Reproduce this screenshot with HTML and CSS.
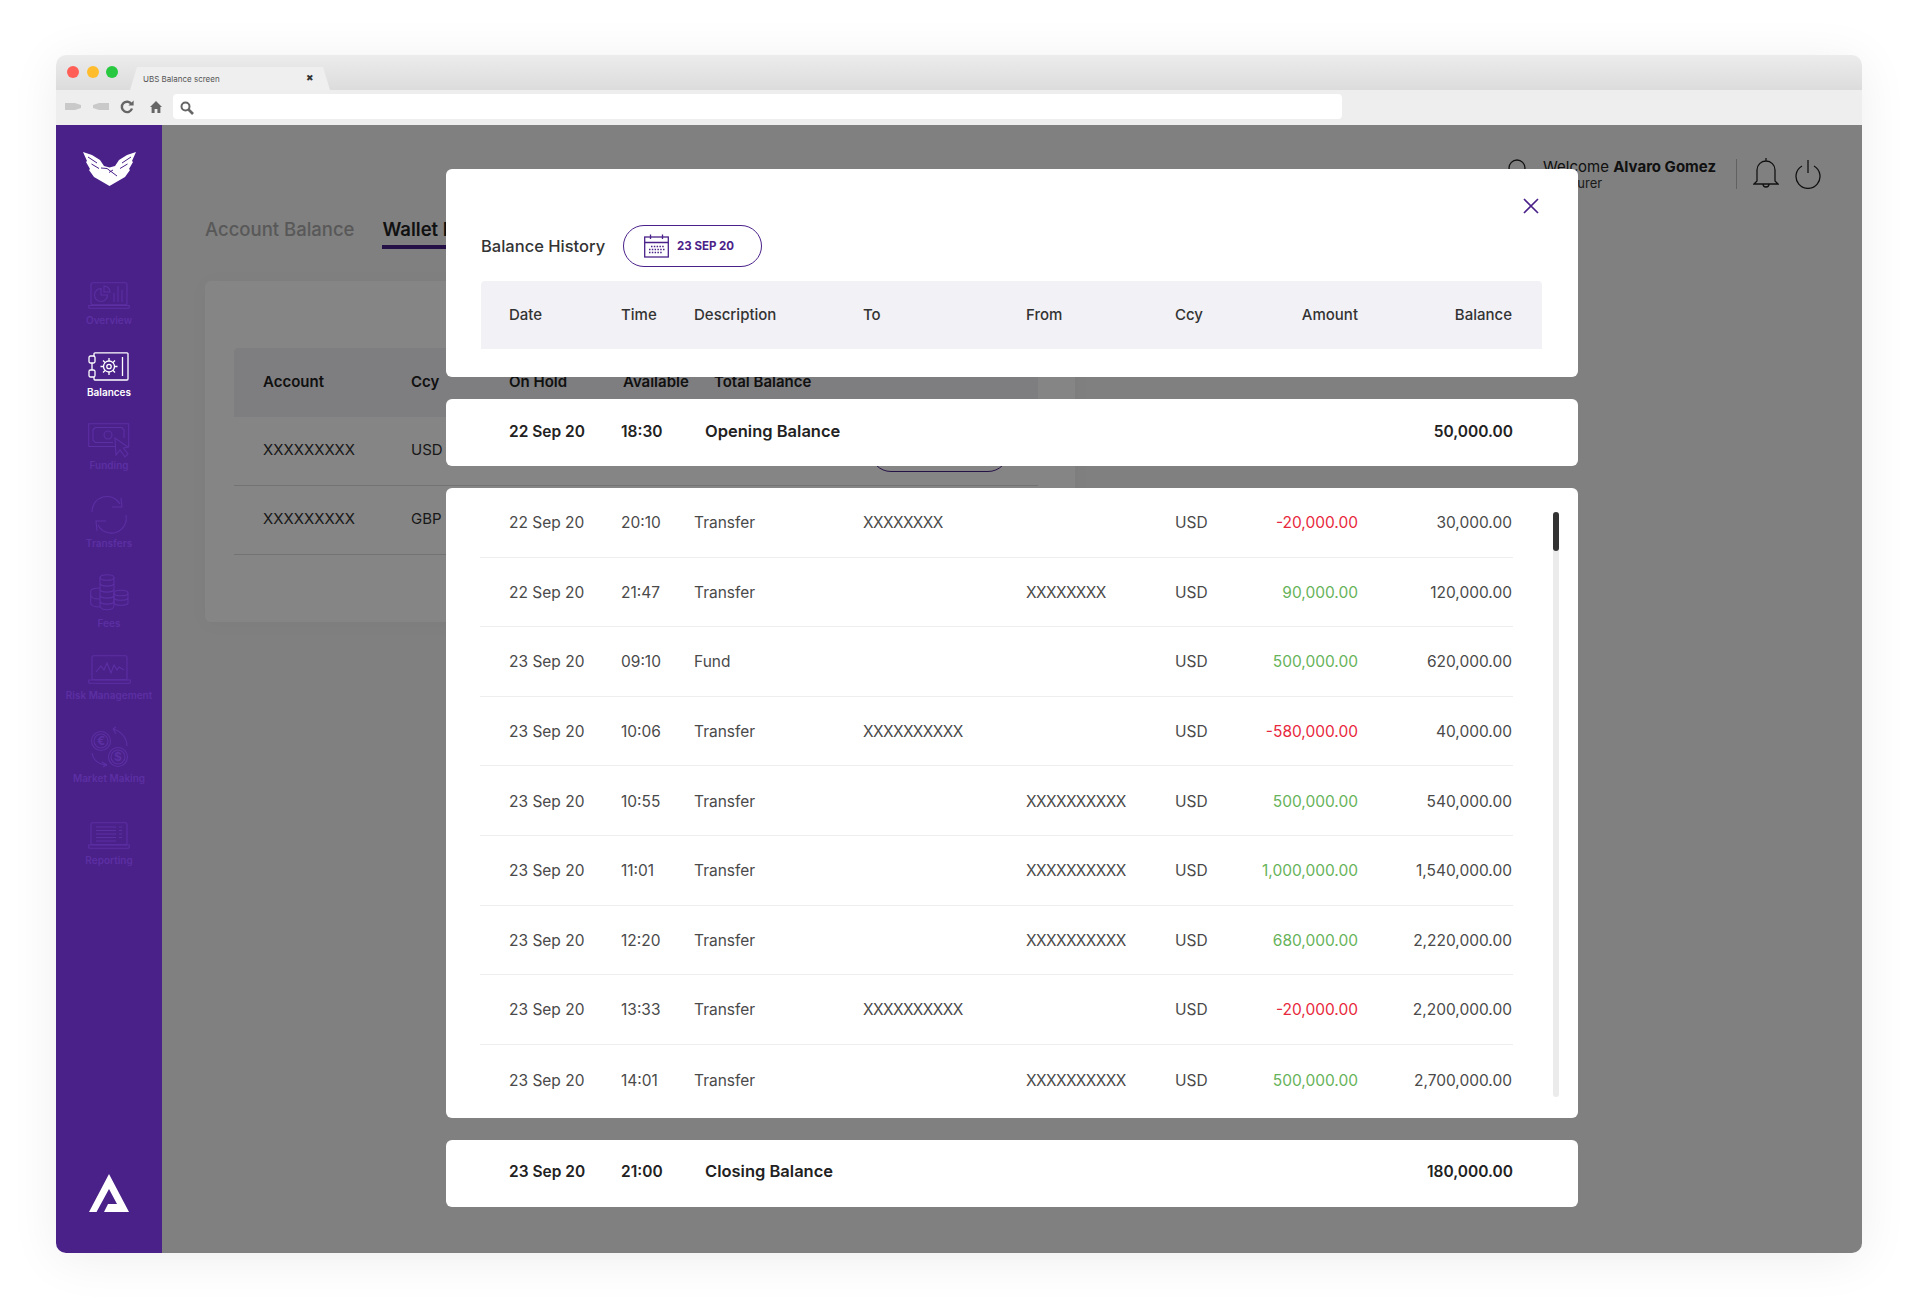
FILE: index.html
```html
<!DOCTYPE html>
<html lang="en">
<head>
    <meta charset="UTF-8">
    <title>UBS Balance screen</title>
    <link rel="stylesheet" href="styles.css">
</head>
<body>

    <div class="window">

        <!-- browser chrome -->
        <div class="titlebar">
            <div class="lights">
                <span class="light red"></span>
                <span class="light yellow"></span>
                <span class="light green"></span>
            </div>
            <div class="tab">
                <span>UBS Balance screen</span>
                <span class="tab-close">✖</span>
            </div>
        </div>
        <div class="toolbar">
            <svg class="tool-back" width="16" height="9" viewBox="0 0 16 9"><path d="M0 1 10 1 16 3V6L10 8 0 8Z" fill="#c9c9c9"/></svg>
            <svg class="tool-forward" width="16" height="9" viewBox="0 0 16 9"><path d="M16 1 6 1 0 3V6L6 8 16 8Z" fill="#c9c9c9"/></svg>
            <svg class="tool-reload" width="14" height="14" viewBox="0 0 14 14"><path d="M11.5 4.2A5.2 5.2 0 1 0 12 8.5" fill="none" stroke="#666" stroke-width="2.4"/><path d="M8.4 5.6 13.6 5.6 13.6 .6Z" fill="#666"/></svg>
            <svg class="tool-home" width="12" height="12" viewBox="0 0 12 12"><path d="M6 0 12 6H10.4V12H7.4V8H4.6V12H1.6V6H0Z" fill="#666"/></svg>
            <div class="address">
                <svg width="14" height="14" viewBox="0 0 14 14"><circle cx="5.5" cy="5.5" r="4" fill="none" stroke="#666" stroke-width="2"/><path d="M8.5 8.5 13 13" stroke="#666" stroke-width="2.6"/></svg>
            </div>
        </div>

        <div class="app">

            <!-- sidebar -->
            <aside class="sidebar">
                <svg class="logo" width="53" height="35" viewBox="0 0 53 35">
                    <path d="M0 0 9 3 17 8 21 14 26.500 15.500 32 14 36 8 44 3 53 0 49 9 50 10 46 17 47 18 42 25 26.500 34 11 25 6 18 7 17 3 10 4 9Z" fill="#fff"/>
                    <path d="M5 5 14 11M8.500 12 16 16.500M48 5 39 11M44.500 12 37 16.500M18 16 24 16.500 34 24M26 20.500 30 18" fill="none" stroke="#4a2189" stroke-width="1"/>
                </svg>
                <nav class="nav">
                    <a class="nav-item item-overview">
                        <svg width="42" height="27" viewBox="0 0 42 27" fill="none"><rect x="3" y=".7" width="36" height="22" rx="1.5"/><path d="M.7 23.5H41.3V25a1.3 1.3 0 0 1-1.3 1.3H2A1.3 1.3 0 0 1 .7 25Z"/><path d="M13 6.500A6.500 6.500 0 1 0 19.500 13H13ZM16 4A6 6 0 0 1 22 10H16ZM26 20V11M30 20V4M34 20V8"/></svg>
                        <span>Overview</span>
                    </a>
                    <a class="nav-item item-balances active">
                        <svg width="41" height="29" viewBox="0 0 41 29" fill="none"><path d="M6 4V1.800A1 1 0 0 1 7 .8H39a1 1 0 0 1 1 1V27a1 1 0 0 1-1 1H7a1 1 0 0 1-1-1V25"/><path d="M34.500 5V24"/><rect x="1" y="4" width="6" height="7" rx="1.500"/><rect x="1" y="18" width="6" height="7" rx="1.500"/><path d="M4 11V18"/><circle cx="21" cy="14.500" r="5.500"/><circle cx="21" cy="14.500" r="2.200"/><path d="M21 6V9M21 20V23M12.500 14.500H15.500M26.500 14.500H29.500M15 8.500 17 10.500M25 18.500 27 20.500M27 8.500 25 10.500M17 18.500 15 20.500"/></svg>
                        <span>Balances</span>
                    </a>
                    <a class="nav-item item-funding">
                        <svg width="42" height="35" viewBox="0 0 42 35" fill="none"><path d="M27 23.500H.7V.7H40.700V23.500H39"/><path d="M25 19.500H7A3 3 0 0 0 5 17.500V6.500A3 3 0 0 0 7 4.500H34A3 3 0 0 0 36 6.500V15"/><circle cx="20" cy="12" r="4"/><path d="M27 15 28 32 32 27 37 34 40 31 35.500 25 40 24Z"/></svg>
                        <span>Funding</span>
                    </a>
                    <a class="nav-item item-transfers">
                        <svg width="36" height="34" viewBox="0 0 36 34" fill="none"><path d="M1 15A15 15 0 0 1 29 7"/><path d="M30 1 31 10 21 10"/><path d="M35 18A15 15 0 0 1 7 28"/><path d="M6 34 5 24 15 24"/></svg>
                        <span>Transfers</span>
                    </a>
                    <a class="nav-item item-fees">
                        <svg width="39" height="37" viewBox="0 0 39 37" fill="none"><ellipse cx="17" cy="3.500" rx="7" ry="2.800"/><path d="M10 3.500V32M24 3.500V32M10 9.500C11 13 23 13 24 9.500M10 15.500C11 19 23 19 24 15.500M10 21.500C11 25 23 25 24 21.500M10 27.500C11 31 23 31 24 27.500M10 32C11 37 23 37 24 32"/><path d="M10 14C4 14 1 15 .7 17V29C1 32 6 33 10 33M.7 21C1 24 6 25 10 25"/><ellipse cx="31" cy="19" rx="7" ry="2.800"/><path d="M24 19V29C25 32 37 32 38 29V19M24 24C25 27 37 27 38 24"/></svg>
                        <span>Fees</span>
                    </a>
                    <a class="nav-item item-risk">
                        <svg width="43" height="29" viewBox="0 0 43 29" fill="none"><rect x="4" y=".7" width="35" height="24" rx="1.500"/><path d="M.7 25H42.300V27a1.300 1.300 0 0 1-1.300 1.300H2A1.300 1.300 0 0 1 .7 27Z"/><path d="M8 17 13 11 16 15 19 8 23 18 26 10 29 15 31 12 36 15"/></svg>
                        <span>Risk Management</span>
                    </a>
                    <a class="nav-item item-market">
                        <svg width="37" height="39" viewBox="0 0 37 39" fill="none"><circle cx="10" cy="13" r="9.500"/><circle cx="10" cy="13" r="7"/><circle cx="27" cy="29" r="9.500"/><circle cx="27" cy="29" r="7"/><path d="M22 1C30 3 36 10 36 18M22 1 25 -1M22 1 25 6M1 25C2 32 8 37 16 37M16 37 11 34M16 37 12 39"/><text x="10" y="17" text-anchor="middle" class="money">€</text><text x="27" y="33" text-anchor="middle" class="money">$</text></svg>
                        <span>Market Making</span>
                    </a>
                    <a class="nav-item item-reporting">
                        <svg width="42" height="27" viewBox="0 0 42 27" fill="none"><rect x="3" y=".7" width="36" height="22" rx="1.500"/><path d="M.7 23H41.300V25a1.300 1.300 0 0 1-1.300 1.300H2A1.300 1.300 0 0 1 .7 25Z"/><path d="M8 5H28M8 8.500H28M8 12H28M8 15.500H28M8 19H28M31 5H34M31 8.500H34M31 12H34M31 15.500H34"/></svg>
                        <span>Reporting</span>
                    </a>
                </nav>
                <svg class="brand" width="40" height="38" viewBox="0 0 40 38"><path d="M20 0 40 38H15L19 30H28L20 15 7.500 38H0Z" fill="#fff"/></svg>
            </aside>

            <!-- page under the dialog -->
            <main class="main">
                <header class="topbar">
                    <svg class="search" width="20" height="20" viewBox="0 0 20 20"><circle cx="9" cy="9" r="8" fill="none" stroke="#222" stroke-width="1.300"/></svg>
                    <div class="user">
                        <div>Welcome <b>Alvaro Gomez</b></div>
                        <div class="role">Treasurer</div>
                    </div>
                    <div class="divider"></div>
                    <svg width="26" height="32" viewBox="0 0 26 32" fill="none" stroke="#222" stroke-width="1.300"><path d="M13 1V4M4 24V13A9 9 0 0 1 22 13V24L25 27H1ZM10 27C10 31 16 31 16 27"/></svg>
                    <svg class="power" width="26" height="30" viewBox="0 0 26 30" fill="none" stroke="#222" stroke-width="1.300"><path d="M13 1V14M7 7A12 12 0 1 0 19 7"/></svg>
                </header>
                <div class="tabs">
                    <a class="page-tab">Account Balance</a>
                    <a class="page-tab current">Wallet Balance</a>
                </div>
                <section class="card">
                    <div class="acc-row acc-head">
                        <span>Account</span><span>Ccy</span><span>On Hold</span><span>Available</span><span>Total Balance</span>
                    </div>
                    <div class="acc-row">
                        <span>XXXXXXXXX</span><span>USD</span><span></span><span></span><span></span><a class="history-btn"></a>
                    </div>
                    <div class="acc-row">
                        <span>XXXXXXXXX</span><span>GBP</span>
                    </div>
                </section>

                <div class="overlay"></div>

                <!-- balance history dialog -->
                <div class="dialog">
                    <div class="panel dialog-head">
                        <svg class="close" width="16" height="16" viewBox="0 0 16 16"><path d="M1 1 15 15M15 1 1 15" stroke="#4a2189" stroke-width="1.700"/></svg>
                        <div class="dialog-title">
                            <h2>Balance History</h2>
                            <div class="date-pill">
                                <svg width="25" height="24" viewBox="0 0 25 24" fill="none" stroke="#4a2189" stroke-width="1.300"><rect x=".7" y="3" width="23.600" height="20"/><path d="M.7 8.500H24.300M6.500 .5V5M18.500 .5V5"/><path d="M7 12.500H21M5 15.500H21M5 18.500H18" stroke-dasharray="1.500 1.300" stroke-width="1.400"/></svg>
                                <span>23 SEP 20</span>
                            </div>
                        </div>
                        <div class="tx tx-head">
                            <span>Date</span><span>Time</span><span>Description</span><span>To</span><span>From</span><span>Ccy</span><span class="num">Amount</span><span class="num">Balance</span>
                        </div>
                    </div>

                    <div class="panel summary">
                        <span>22 Sep 20</span><span>18:30</span><span class="summary-label">Opening Balance</span><span class="num">50,000.00</span>
                    </div>

                    <div class="panel history">
                        <div class="tx-list">
                            <div class="tx"><span>22 Sep 20</span><span>20:10</span><span>Transfer</span><span class="mask">XXXXXXXX</span><span></span><span>USD</span><span class="num neg">-20,000.00</span><span class="num">30,000.00</span></div>
                            <div class="tx"><span>22 Sep 20</span><span>21:47</span><span>Transfer</span><span></span><span class="mask">XXXXXXXX</span><span>USD</span><span class="num pos">90,000.00</span><span class="num">120,000.00</span></div>
                            <div class="tx"><span>23 Sep 20</span><span>09:10</span><span>Fund</span><span></span><span></span><span>USD</span><span class="num pos">500,000.00</span><span class="num">620,000.00</span></div>
                            <div class="tx"><span>23 Sep 20</span><span>10:06</span><span>Transfer</span><span class="mask">XXXXXXXXXX</span><span></span><span>USD</span><span class="num neg">-580,000.00</span><span class="num">40,000.00</span></div>
                            <div class="tx"><span>23 Sep 20</span><span>10:55</span><span>Transfer</span><span></span><span class="mask">XXXXXXXXXX</span><span>USD</span><span class="num pos">500,000.00</span><span class="num">540,000.00</span></div>
                            <div class="tx"><span>23 Sep 20</span><span>11:01</span><span>Transfer</span><span></span><span class="mask">XXXXXXXXXX</span><span>USD</span><span class="num pos">1,000,000.00</span><span class="num">1,540,000.00</span></div>
                            <div class="tx"><span>23 Sep 20</span><span>12:20</span><span>Transfer</span><span></span><span class="mask">XXXXXXXXXX</span><span>USD</span><span class="num pos">680,000.00</span><span class="num">2,220,000.00</span></div>
                            <div class="tx"><span>23 Sep 20</span><span>13:33</span><span>Transfer</span><span class="mask">XXXXXXXXXX</span><span></span><span>USD</span><span class="num neg">-20,000.00</span><span class="num">2,200,000.00</span></div>
                            <div class="tx"><span>23 Sep 20</span><span>14:01</span><span>Transfer</span><span></span><span class="mask">XXXXXXXXXX</span><span>USD</span><span class="num pos">500,000.00</span><span class="num">2,700,000.00</span></div>
                        </div>
                        <div class="scroll-track"><div class="scroll-thumb"></div></div>
                    </div>

                    <div class="panel summary closing">
                        <span>23 Sep 20</span><span>21:00</span><span class="summary-label">Closing Balance</span><span class="num">180,000.00</span>
                    </div>
                </div>
            </main>
        </div>
    </div>

</body>
</html>
```

FILE: styles.css
```css
* {
    box-sizing: border-box;
    margin: 0;
    padding: 0;
}

body {
    background: #fff;
    font-family: Inter, "Liberation Sans", sans-serif;
    padding: 55px 58px 56px 56px;
    color: #444;
}

.window {
    height: 1198px;
    border-radius: 10px;
    overflow: hidden;
    display: flex;
    flex-direction: column;
    box-shadow: 0 6px 50px rgba(0, 0, 0, 0.07);
}

/* browser chrome */
.titlebar {
    height: 35px;
    background: linear-gradient(#ececec, #dcdcdc);
    display: flex;
    align-items: flex-end;
    padding-left: 11px;
}

.lights {
    display: flex;
    gap: 7.500px;
    align-self: flex-start;
    margin-top: 11px;
}

.light {
    width: 12px;
    height: 12px;
    border-radius: 50%;
}

.red { background: #ff5f57; }
.yellow { background: #ffbd2e; }
.green { background: #28c840; }

.tab {
    width: 200px;
    height: 23px;
    margin-left: 12px;
    padding: 7px 16px 0 13px;
    display: flex;
    justify-content: space-between;
    background: #efefef;
    clip-path: polygon(7px 0, 193px 0, 200px 100%, 0 100%);
    font-size: 8px;
    color: #555;
}

.tab-close {
    font-size: 9px;
    color: #333;
    margin-top: -2px;
}

.toolbar {
    height: 35px;
    background: #eee;
    display: flex;
    align-items: center;
    padding: 0 0 2px 9px;
}

.tool-forward { margin-left: 12px; }
.tool-reload { margin-left: 11px; }
.tool-home { margin-left: 16px; }

.address {
    width: 1169px;
    height: 25px;
    margin-left: 11px;
    padding: 5px 7px;
    background: #fff;
    border-radius: 4px;
}

/* sidebar */
.app {
    flex: 1;
    display: flex;
    min-height: 0;
}

.sidebar {
    width: 106px;
    flex-shrink: 0;
    background: #4a2189;
    display: flex;
    flex-direction: column;
    align-items: center;
    position: relative;
}

.logo {
    margin-top: 27px;
}

.nav {
    margin-top: 95px;
    display: flex;
    flex-direction: column;
    align-items: center;
}

.nav-item {
    display: flex;
    flex-direction: column;
    align-items: center;
    font-size: 10px;
    line-height: 12px;
    font-weight: 600;
    white-space: nowrap;
    color: #5c2fa3;
}

.nav-item svg {
    stroke: #5c2fa3;
    stroke-width: 1.100;
    overflow: visible;
}

.nav-item.active {
    color: #fff;
}

.nav-item.active svg {
    stroke: #fff;
    stroke-width: 1.300;
}

.money {
    font-size: 12px;
    font-weight: 700;
    fill: #5c2fa3;
    stroke: none;
}

.item-overview { height: 70px; gap: 5px; }
.item-balances { height: 71px; gap: 5px; }
.item-funding { height: 74px; gap: 1px; }
.item-transfers { height: 77px; gap: 6px; }
.item-fees { height: 81px; gap: 6px; }
.item-risk { height: 73px; gap: 5px; }
.item-market { height: 94px; gap: 5px; }
.item-reporting { gap: 5px; }

.brand {
    margin-top: auto;
    margin-bottom: 41px;
}

/* page under the dialog */
.main {
    flex: 1;
    position: relative;
    background: #f5f5f5;
    padding: 0 43px;
}

.topbar {
    height: 91px;
    padding-top: 32px;
    display: flex;
    justify-content: flex-end;
    align-items: flex-start;
    gap: 16px;
    color: #222;
}

.search { margin-top: 2px; margin-right: -1px; }

.user {
    font-size: 15px;
    line-height: 17px;
    margin: 1px 4px 0 0;
}

.role {
    font-size: 13px;
    color: #333;
}

.divider {
    width: 1px;
    height: 30px;
    background: #bbb;
    margin-top: 2px;
}

.power { margin: 2px -2px 0 0; }

.tabs {
    display: flex;
    gap: 28px;
    font-size: 18.500px;
    font-weight: 500;
}

.page-tab {
    height: 33px;
    line-height: 26px;
    color: #aaa;
}

.page-tab.current {
    color: #222;
    font-weight: 600;
    border-bottom: 4px solid #4a2189;
}

.card {
    width: 870px;
    height: 341px;
    margin-top: 32px;
    padding: 67px 0 0 29px;
    background: #fff;
    border-radius: 6px;
    box-shadow: 0 2px 20px rgba(0, 0, 0, 0.03);
}

.acc-row {
    width: 804px;
    height: 69px;
    padding: 0 0 3px 29px;
    display: grid;
    grid-template-columns: 148px 98px 114px 91px 150px 145px;
    align-items: center;
    font-size: 15px;
    border-bottom: 1px solid #ddd;
    color: #333;
}

.acc-head {
    background: #f2f1f6;
    border: 0;
    border-radius: 4px 4px 0 0;
    font-weight: 600;
    color: #222;
}

.history-btn {
    display: block;
    height: 42px;
    margin: 3px 0 0 6px;
    border: 1.500px solid #4a2189;
    border-radius: 21px;
}

.overlay {
    position: absolute;
    inset: 0;
    background: rgba(0, 0, 0, 0.48);
}

/* balance history dialog */
.dialog {
    position: absolute;
    left: 284px;
    top: 44px;
    width: 1132px;
    display: flex;
    flex-direction: column;
    gap: 22px;
}

.panel {
    background: #fff;
    border-radius: 6px;
}

.dialog-head {
    position: relative;
    height: 208px;
    padding: 56px 36px 0 35px;
}

.close {
    position: absolute;
    top: 29px;
    right: 39px;
}

.dialog-title {
    display: flex;
    align-items: center;
}

.dialog-title h2 {
    width: 142px;
    font-size: 16.500px;
    font-weight: 500;
    color: #333;
}

.date-pill {
    width: 139px;
    height: 42px;
    padding-left: 20px;
    display: flex;
    align-items: center;
    gap: 8px;
    border: 1.500px solid #4a2189;
    border-radius: 21px;
    font-size: 11.500px;
    font-weight: 700;
    color: #4a2189;
}

.tx {
    display: grid;
    grid-template-columns: 112px 73px 169px 163px 149px 60px 123px 154px;
    align-items: center;
    height: 69.600px;
    padding: 1px 0 0 29px;
    font-size: 15.500px;
    white-space: nowrap;
    border-bottom: 1px solid #eee;
    color: #4a4a4a;
}

.tx:last-child {
    border-bottom: 0;
}

.tx-head {
    height: 68px;
    margin-top: 14px;
    padding: 0 0 2px 28px;
    background: #f2f1f6;
    border: 0;
    border-radius: 4px 4px 0 0;
    font-size: 15px;
    font-weight: 500;
    color: #333;
}

.num {
    text-align: right;
}

.mask {
    letter-spacing: -0.600px;
}

.neg { color: #e8283c; }
.pos { color: #67b35a; }

.summary {
    height: 67px;
    padding: 0 65px 2px 63px;
    display: grid;
    grid-template-columns: 112px 84px 1fr 200px;
    align-items: center;
    font-size: 15.500px;
    font-weight: 600;
    color: #222;
}

.closing {
    padding-bottom: 4px;
}

.summary-label {
    font-size: 16.500px;
    margin-top: -2px;
}

.history {
    height: 630px;
    padding-left: 34px;
    display: flex;
}

.tx-list {
    width: 1033px;
}

.scroll-track {
    width: 6px;
    height: 585px;
    margin: 24px 0 0 40px;
    background: #ebebeb;
    border-radius: 3px;
}

.scroll-thumb {
    height: 39px;
    background: #333;
    border-radius: 3px;
}
```
